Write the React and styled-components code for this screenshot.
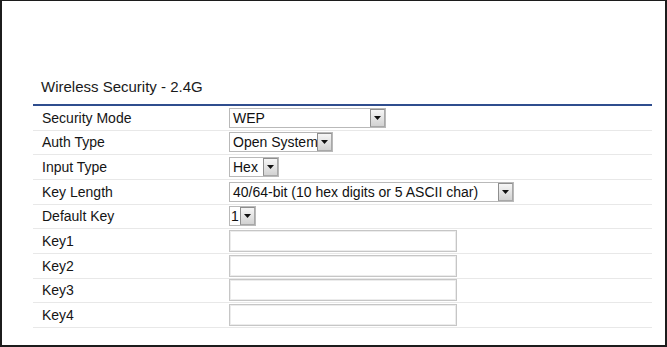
import React from 'react';
import styled, { createGlobalStyle } from 'styled-components';

const GlobalStyle = createGlobalStyle`
  html, body {
    margin: 0;
    padding: 0;
    background: #ffffff;
  }
  body {
    font-family: "Liberation Sans", Arial, sans-serif;
  }
`;

const Frame = styled.div`
  width: 667px;
  height: 347px;
  box-sizing: border-box;
  border-style: solid;
  border-color: #1c1c1c;
  border-width: 1px 2px 2px 2px;
  background: #ffffff;
  overflow: hidden;
`;

const Title = styled.div`
  margin: 77px 0 0 39px;
  height: 18px;
  line-height: 18px;
  font-size: 15px;
  color: #1a1a1a;
`;

const Table = styled.div`
  margin: 8px 0 0 31px;
  width: 619px;
  border-top: 2px solid #2f4d8e;
`;

const Row = styled.div`
  display: grid;
  grid-template-columns: 196px 1fr;
  align-items: center;
  height: 24.67px;
  box-sizing: border-box;
  border-bottom: 1px solid #e8e8e8;
`;

const Label = styled.div`
  padding-left: 9px;
  font-size: 14px;
  color: #151515;
`;

const SelectBox = styled.div`
  display: flex;
  align-items: stretch;
  width: ${(p) => p.$w}px;
  height: 20px;
  box-sizing: border-box;
  border: 1px solid #b9b9b9;
  background: #ffffff;
`;

const SelectText = styled.span`
  flex: 1;
  min-width: 0;
  padding-left: ${(p) => (p.$tight ? 1 : 3)}px;
  font-size: 14px;
  line-height: 18px;
  color: #111;
  white-space: nowrap;
`;

const ArrowBtn = styled.span`
  flex: none;
  width: 15px;
  box-sizing: border-box;
  border: 1px solid #8e8e8e;
  border-right-color: #a8a8a8;
  border-bottom-color: #a8a8a8;
  background: linear-gradient(#f6f6f6, #d2d2d2);
  display: flex;
  align-items: center;
  justify-content: center;
`;

const TextInput = styled.input`
  display: block;
  width: 228px;
  height: 22px;
  box-sizing: border-box;
  border: 1px solid #c6c6c6;
  box-shadow: inset 0 0 0 1px #ececec;
  padding: 0 3px;
  font: 14px "Liberation Sans", Arial, sans-serif;
  outline: none;
`;

const Select = ({ value, w, tight }) => (
  <SelectBox $w={w}>
    <SelectText $tight={tight}>{value}</SelectText>
    <ArrowBtn>
      <svg width="7" height="4" viewBox="0 0 7 4">
        <path d="M0 0h7L3.5 4z" fill="#111" />
      </svg>
    </ArrowBtn>
  </SelectBox>
);

const rows = [
  { label: 'Security Mode', select: 'WEP', w: 157 },
  { label: 'Auth Type', select: 'Open System', w: 104 },
  { label: 'Input Type', select: 'Hex', w: 50 },
  { label: 'Key Length', select: '40/64-bit (10 hex digits or 5 ASCII char)', w: 285 },
  { label: 'Default Key', select: '1', w: 27, tight: true },
  { label: 'Key1' },
  { label: 'Key2' },
  { label: 'Key3' },
  { label: 'Key4' },
];

export default function App() {
  return (
    <>
      <GlobalStyle />
      <Frame>
        <Title>Wireless Security - 2.4G</Title>
        <Table>
          {rows.map((r) => (
            <Row key={r.label}>
              <Label>{r.label}</Label>
              <div>
                {r.select ? (
                  <Select value={r.select} w={r.w} tight={r.tight} />
                ) : (
                  <TextInput type="text" />
                )}
              </div>
            </Row>
          ))}
        </Table>
      </Frame>
    </>
  );
}
